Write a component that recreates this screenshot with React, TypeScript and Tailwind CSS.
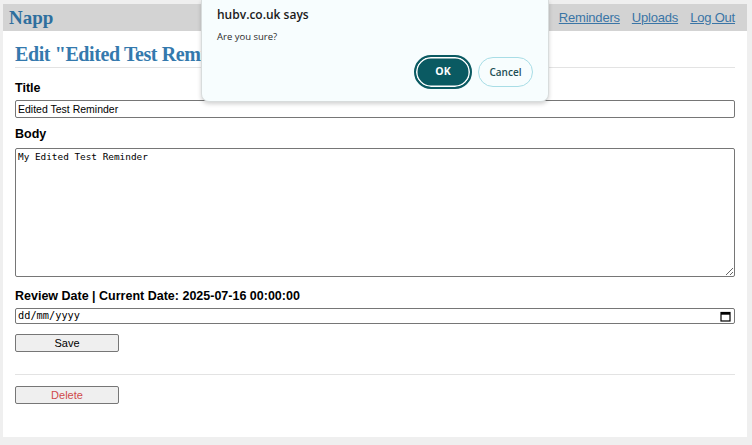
import React from "react";

export default function App() {
  return (
    <div className="relative h-[445px] w-[752px] overflow-hidden bg-[#efefef] pl-[3px] pr-[5px] pt-[4px] pb-[8px] font-['Liberation_Sans',Arial,sans-serif]">
      <div className="flex h-full flex-col bg-white">
        {/* Nav bar */}
        <div className="flex h-[27px] items-center justify-between bg-[#d3d3d3] pl-[6px] pr-[12px]">
          <span className="font-['Liberation_Serif',serif] text-[19px] font-bold leading-none text-[#2e6f9e]">Napp</span>
          <div className="flex items-center gap-[12px] text-[13px] tracking-[-0.2px] text-[#3a75a6]">
            <a className="underline">Reminders</a>
            <a className="underline">Uploads</a>
            <a className="underline">Log Out</a>
          </div>
        </div>

        <div className="px-[12px]">
          <h1 className="mt-[11px] font-['Liberation_Serif',serif] text-[20px] font-bold leading-[24px] tracking-[-0.4px] text-[#3479ad]">
            Edit "Edited Test Reminder"
          </h1>
          <div className="mt-[1px] h-[1px] bg-[#e3e3e3]" />

          <div className="mt-[12px] text-[12.5px] font-bold leading-[16px] text-black">Title</div>
          <input
            className="mt-[4px] block h-[18px] w-full rounded-[2px] border border-[#767676] px-[2px] text-[10.5px] text-black outline-none"
            defaultValue="Edited Test Reminder"
          />

          <div className="mt-[8px] text-[12.5px] font-bold leading-[16px] text-black">Body</div>
          <textarea
            className="mt-[6px] block h-[129px] w-full resize-y rounded-[2px] border border-[#767676] px-[2px] py-[1px] font-['DejaVu_Sans_Mono',monospace] text-[9.4px] text-black outline-none"
            defaultValue="My Edited Test Reminder"
          />

          <div className="mt-[11px] text-[12.5px] font-bold leading-[16px] text-black">
            Review Date | Current Date: 2025-07-16 00:00:00
          </div>
          <div className="mt-[4px] flex h-[16px] w-full items-center justify-between rounded-[2px] border border-[#767676] pl-[2px] pr-[3px]">
            <span className="font-['DejaVu_Sans_Mono',monospace] text-[10.3px] text-black">dd/mm/yyyy</span>
            <svg width="11" height="11" viewBox="0 0 11 11">
              <rect x="1" y="1.5" width="9" height="8.5" fill="none" stroke="#000" strokeWidth="1.2" />
              <rect x="1" y="1.5" width="9" height="2.2" fill="#000" />
            </svg>
          </div>

          <button className="mt-[10px] block h-[18px] w-[104px] rounded-[2px] border border-[#767676] bg-[#efefef] text-[11px] leading-none text-black">
            Save
          </button>

          <div className="mt-[22px] h-[1px] bg-[#e3e3e3]" />

          <button className="mt-[11px] block h-[18px] w-[104px] rounded-[2px] border border-[#767676] bg-[#efefef] text-[11px] leading-none text-[#d04a4a]">
            Delete
          </button>
        </div>
      </div>

      {/* Confirm dialog */}
      <div className="absolute left-[201px] top-0 h-[102px] w-[348px] rounded-b-[8px] border border-t-0 border-[#d8dcdc] bg-[#f7fdfe] font-['Open_Sans','Noto_Sans',sans-serif] shadow-[0_2px_4px_rgba(0,0,0,0.18)]">
        <div className="pl-[15px] pt-[5px] text-[12px] font-semibold leading-[20px] text-[#1b1b1b]">hubv.co.uk says</div>
        <div className="pl-[15px] pt-[5px] text-[9.5px] leading-[14px] text-[#2b2b2b]">Are you sure?</div>
        <div className="mt-[11px] flex justify-end gap-[6px] pr-[15px]">
          <button className="flex h-[34px] w-[58px] items-center justify-center rounded-full border-[2px] border-[#0a5a62] bg-[#0a5a62] text-[10.5px] font-bold text-white shadow-[inset_0_0_0_1.5px_#ffffff]">
            OK
          </button>
          <button className="flex h-[30px] w-[55px] items-center justify-center self-center rounded-full border border-[#a8dde6] bg-[#f7fdfe] text-[10px] font-semibold text-[#1e4f56]">
            Cancel
          </button>
        </div>
      </div>
    </div>
  );
}
